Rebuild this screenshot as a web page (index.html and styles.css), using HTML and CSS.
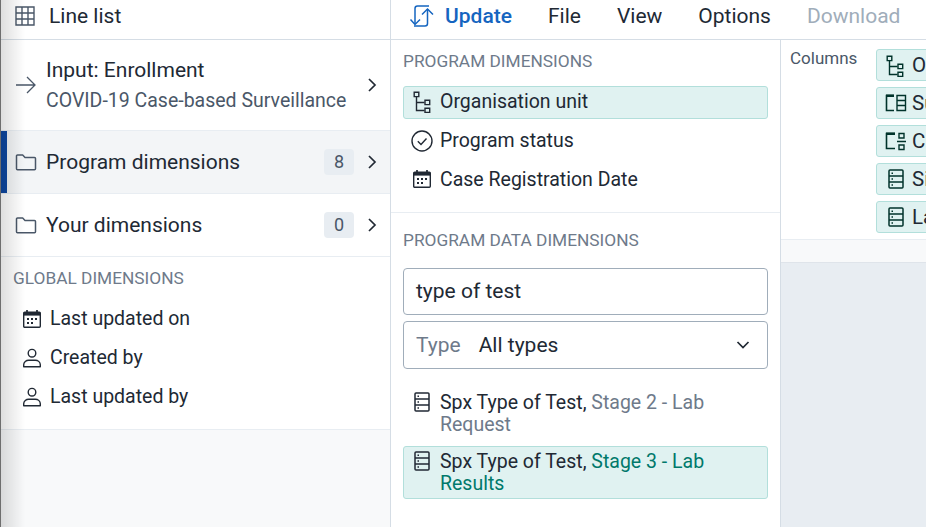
FILE: index.html
```html
<!DOCTYPE html>
<html lang="en">
  <head>
    <meta charset="UTF-8" />
    <meta name="viewport" content="width=device-width, initial-scale=1.0" />
    <title>Line list</title>
    <link rel="stylesheet" href="styles.css">
  </head>
  <body>
    <svg class="icon-defs" width="0" height="0" aria-hidden="true">
      <symbol id="i-folder" viewBox="0 0 22 20">
        <path d="M1.500 4a1 1 0 0 1 1-1h5.200l2.300 2.400h9.500a1 1 0 0 1 1 1v10.300a1 1 0 0 1-1 1H2.500a1 1 0 0 1-1-1z" fill="none" stroke="currentColor" stroke-width="1.500" stroke-linejoin="round"/>
      </symbol>
      <symbol id="i-chevron" viewBox="0 0 10 16">
        <path d="M2 2l6 6-6 6" fill="none" stroke="currentColor" stroke-width="1.700"/>
      </symbol>
      <symbol id="i-calendar" viewBox="0 0 20 20">
        <path d="M5 1v3M15 1v3" stroke="currentColor" stroke-width="1.700"/>
        <rect x="1.700" y="3.200" width="16.600" height="15" rx="1" fill="none" stroke="currentColor" stroke-width="1.400"/>
        <path d="M1.700 3.200h16.600v3.400H1.700z" fill="currentColor"/>
        <path d="M5 9h2v2H5zM9 9h2v2H9zM13 9h2v2h-2zM5 13h2v2H5zM9 13h2v2H9z" fill="currentColor"/>
      </symbol>
      <symbol id="i-user" viewBox="0 0 20 20">
        <circle cx="10" cy="5.200" r="3.800" fill="none" stroke="currentColor" stroke-width="1.400"/>
        <path d="M1.700 18.700v-1.900c0-2.800 2.500-4.600 5-4.600h6.600c2.500 0 5 1.800 5 4.600v1.900z" fill="none" stroke="currentColor" stroke-width="1.400" stroke-linejoin="round"/>
      </symbol>
      <symbol id="i-orgunit" viewBox="0 0 18 22">
        <path d="M3.500 5.500v14h8M3.500 11.500h8" fill="none" stroke="currentColor" stroke-width="1.400"/>
        <path d="M1.200 1.200h4.600v4.400H1.200zM12 9.200h4.700v4.400H12zM12 17.200h4.700v4.200H12z" fill="none" stroke="currentColor" stroke-width="1.400"/>
      </symbol>
      <symbol id="i-status" viewBox="0 0 22 22">
        <circle cx="11" cy="11" r="10" fill="none" stroke="currentColor" stroke-width="1.400"/>
        <path d="M6.800 11.300l3.200 3.200 5.500-6" fill="none" stroke="currentColor" stroke-width="1.400"/>
      </symbol>
      <symbol id="i-data" viewBox="0 0 16 20">
        <rect x="1" y="1" width="14" height="18" rx="1" fill="none" stroke="currentColor" stroke-width="1.500"/>
        <path d="M1 7h14M1 13h14" stroke="currentColor" stroke-width="1.500"/>
        <path d="M3.500 3.500h1.500v1.500H3.500zM3.500 9.300h1.500v1.500H3.500zM3.500 15.200h1.500v1.500H3.500z" fill="currentColor"/>
      </symbol>
    </svg>

    <div class="app">
      <header class="topbar">
        <div class="topbar-title">
          <svg class="grid-icon" viewBox="0 0 20 20">
            <path d="M1 1h18v18H1zM7 1v18M13 1v18M1 7h18M1 13h18" fill="none" stroke="currentColor" stroke-width="1.400"/>
          </svg>
          <span>Line list</span>
        </div>
        <nav class="menu">
          <span class="menu-update">
            <svg class="update-icon" viewBox="0 0 25 24">
              <path d="M6 20V4.500A2.500 2.500 0 0 1 8.500 2H20" fill="none" stroke="currentColor" stroke-width="1.500"/>
              <path d="M1.500 15.500L6 20.500l5-5" fill="none" stroke="currentColor" stroke-width="1.500"/>
              <path d="M18.500 5V19.500A2.500 2.500 0 0 1 16 22H5" fill="none" stroke="currentColor" stroke-width="1.500"/>
              <path d="M13 10.500L18.500 5l5.500 5.500" fill="none" stroke="currentColor" stroke-width="1.500"/>
            </svg>
            Update
          </span>
          <span class="menu-item">File</span>
          <span class="menu-item">View</span>
          <span class="menu-item">Options</span>
          <span class="menu-item menu-disabled">Download</span>
        </nav>
      </header>

      <div class="workspace">
        <aside class="sidebar">
          <div class="nav-row input-row">
            <svg class="nav-icon" viewBox="0 0 22 20">
              <path d="M1 10h19M12 2l8 8-8 8" fill="none" stroke="currentColor" stroke-width="1.300"/>
            </svg>
            <div class="nav-text">
              <div class="nav-label">Input: Enrollment</div>
              <div class="nav-sub">COVID-19 Case-based Surveillance</div>
            </div>
            <svg class="chevron"><use href="#i-chevron"/></svg>
          </div>
          <div class="nav-row nav-active">
            <svg class="nav-icon"><use href="#i-folder"/></svg>
            <div class="nav-label nav-text">Program dimensions</div>
            <span class="badge">8</span>
            <svg class="chevron"><use href="#i-chevron"/></svg>
          </div>
          <div class="nav-row">
            <svg class="nav-icon"><use href="#i-folder"/></svg>
            <div class="nav-label nav-text">Your dimensions</div>
            <span class="badge">0</span>
            <svg class="chevron"><use href="#i-chevron"/></svg>
          </div>
          <section class="global">
            <h3 class="section-title">Global dimensions</h3>
            <div class="global-item"><svg class="dim-icon"><use href="#i-calendar"/></svg>Last updated on</div>
            <div class="global-item"><svg class="dim-icon"><use href="#i-user"/></svg>Created by</div>
            <div class="global-item"><svg class="dim-icon"><use href="#i-user"/></svg>Last updated by</div>
          </section>
        </aside>

        <main class="panel">
          <section class="panel-top">
            <h3 class="section-title">Program dimensions</h3>
            <div class="dim selected"><svg class="dim-icon tall"><use href="#i-orgunit"/></svg>Organisation unit</div>
            <div class="dim"><svg class="dim-icon round"><use href="#i-status"/></svg>Program status</div>
            <div class="dim"><svg class="dim-icon"><use href="#i-calendar"/></svg>Case Registration Date</div>
          </section>
          <section class="panel-bottom">
            <h3 class="section-title">Program data dimensions</h3>
            <div class="field search-field">type of test</div>
            <div class="field type-field">
              <span class="type-label">Type</span>
              <span class="type-value">All types</span>
              <svg class="caret" viewBox="0 0 14 10">
                <path d="M1.500 2l5.500 5.500L12.500 2" fill="none" stroke="currentColor" stroke-width="1.700"/>
              </svg>
            </div>
            <div class="result">
              <svg class="result-icon"><use href="#i-data"/></svg>
              <div>Spx Type of Test, <span class="stage">Stage 2 - Lab Request</span></div>
            </div>
            <div class="result selected">
              <svg class="result-icon"><use href="#i-data"/></svg>
              <div>Spx Type of Test, <span class="stage">Stage 3 - Lab Results</span></div>
            </div>
          </section>
        </main>

        <div class="layout-area">
          <div class="layout-card">
            <div class="columns-label">Columns</div>
            <div class="chips">
              <div class="chip"><svg class="chip-icon tall"><use href="#i-orgunit"/></svg>Organisation unit</div>
              <div class="chip">
                <svg class="chip-icon wide" viewBox="0 0 22 20">
                  <path d="M9 2.500H1.500v15H9" fill="none" stroke="currentColor" stroke-width="1.600"/>
                  <path d="M1 1.500h8v2.500H1z" fill="currentColor"/>
                  <path d="M12 2.500h8.500v15H12zM12 7.500h8.500M12 12.500h8.500" fill="none" stroke="currentColor" stroke-width="1.400"/>
                </svg>
                Su
              </div>
              <div class="chip">
                <svg class="chip-icon wide" viewBox="0 0 22 20">
                  <path d="M10 2.500H1.500v15H10" fill="none" stroke="currentColor" stroke-width="1.600"/>
                  <path d="M1 1.500h9v2.500H1z" fill="currentColor"/>
                  <path d="M14 2.500h5v4.500h-5zM14 14h5v4.500h-5zM12 10.500h9" fill="none" stroke="currentColor" stroke-width="1.400"/>
                </svg>
                C
              </div>
              <div class="chip"><svg class="chip-icon data"><use href="#i-data"/></svg>Si</div>
              <div class="chip"><svg class="chip-icon data"><use href="#i-data"/></svg>La</div>
            </div>
          </div>
          <div class="layout-strip"></div>
          <div class="canvas"></div>
        </div>
      </div>
    </div>
  </body>
</html>
```

FILE: styles.css
```css
:root {
  --border: #d5dde5;
  --border-light: #e8edf2;
  --text: #212934;
  --text-sub: #4a5768;
  --text-muted: #6e7a8a;
  --teal-bg: #e0f2f1;
  --teal-border: #b2dfdb;
}

* {
  box-sizing: border-box;
}

html,
body {
  margin: 0;
  height: 100%;
  overflow: hidden;
}

body {
  background: #fff;
  color: var(--text);
  font-family: Roboto, "Liberation Sans", sans-serif;
  font-size: 19.5px;
}

.icon-defs {
  position: absolute;
}

.app {
  position: relative;
  display: flex;
  flex-direction: column;
  height: 527px;
}

/* dark edge and soft shadow on the left of the window */
.app::after {
  content: '';
  position: absolute;
  top: 0;
  bottom: 0;
  left: 0;
  width: 24px;
  border-left: 1px solid #6e6e6e;
  background: linear-gradient(to right, rgba(0, 0, 0, 0.13), rgba(0, 0, 0, 0));
  pointer-events: none;
}

/* top bar */
.topbar {
  display: flex;
  height: 40px;
  flex-shrink: 0;
  padding-bottom: 8px;
  border-bottom: 1px solid var(--border);
  font-size: 21px;
}

.topbar-title {
  display: flex;
  align-items: center;
  flex-shrink: 0;
  width: 391px;
  margin-bottom: -8px;
  padding: 0 0 8px 15px;
  border-right: 1px solid var(--border);
}

.grid-icon {
  width: 20px;
  height: 20px;
  margin-right: 14px;
  color: var(--text-sub);
}

.menu {
  display: flex;
  align-items: center;
  padding-left: 18px;
  white-space: nowrap;
}

.menu-update {
  display: flex;
  align-items: center;
  margin-right: 36px;
  color: #1565c0;
  font-weight: 500;
}

.update-icon {
  width: 25px;
  height: 24px;
  margin-right: 11px;
}

.menu-item {
  margin-right: 36px;
}

.menu-disabled {
  color: #a0adba;
}

/* main columns */
.workspace {
  display: flex;
  flex: 1;
  min-height: 0;
}

.sidebar {
  width: 391px;
  flex-shrink: 0;
  background: #f8f9fa;
  border-right: 1px solid var(--border);
}

.nav-row {
  display: flex;
  align-items: center;
  height: 63px;
  padding-left: 15px;
  padding-right: 13px;
  background: #fff;
  border-bottom: 1px solid var(--border-light);
}

.input-row {
  height: 91px;
}

.nav-active {
  background: #f3f5f7;
  box-shadow: inset 7px 0 0 #0d47a1;
}

.nav-icon {
  width: 22px;
  height: 20px;
  margin-right: 9px;
  color: var(--text-sub);
}

.nav-text {
  flex: 1;
}

.nav-label {
  font-size: 21px;
}

.input-row .nav-text {
  padding-bottom: 1px;
}

.nav-sub {
  margin-top: 7px;
  color: var(--text-sub);
}

.badge {
  width: 30px;
  height: 26px;
  margin-right: 13px;
  border-radius: 4px;
  background: var(--border-light);
  color: var(--text-sub);
  font-size: 18px;
  line-height: 26px;
  text-align: center;
}

.chevron {
  width: 10px;
  height: 16px;
  color: var(--text);
}

.section-title {
  margin: 0;
  color: var(--text-muted);
  font-size: 17.3px;
  font-weight: 400;
  line-height: 20px;
  text-transform: uppercase;
}

.global {
  padding: 11px 13px 13px;
  background: #fff;
  border-bottom: 1px solid var(--border-light);
}

.global-item {
  display: flex;
  align-items: center;
  height: 39px;
  padding-left: 9px;
}

.global .section-title {
  margin-bottom: 11px;
}

.dim-icon {
  width: 20px;
  height: 20px;
  margin-right: 8px;
  flex-shrink: 0;
}

.dim-icon.tall {
  height: 22px;
  margin-top: 2px;
}

.dim-icon.round {
  width: 22px;
  height: 22px;
  margin: 2px 7px 0 -1px;
}

/* dimensions panel */
.panel {
  width: 390px;
  flex-shrink: 0;
  border-right: 1px solid var(--border);
}

.panel-top {
  height: 173px;
  padding: 11px 12px 0;
  border-bottom: 1px solid var(--border-light);
}

.panel-top .section-title {
  margin-bottom: 15px;
}

.dim {
  display: flex;
  align-items: center;
  height: 33px;
  margin-bottom: 6px;
  padding: 0 0 3px 8px;
  border: 1px solid transparent;
  border-radius: 3px;
}

.panel-bottom {
  padding: 17px 12px 0;
}

.panel-bottom .section-title {
  margin-bottom: 18px;
}

.field {
  display: flex;
  align-items: center;
  height: 47px;
  padding: 0 12px;
  border: 1px solid #a0adba;
  border-radius: 4px;
  font-size: 21px;
}

.search-field {
  margin-bottom: 6px;
  padding-bottom: 2px;
}

.type-field {
  height: 48px;
  margin-bottom: 18px;
}

.type-label {
  margin-right: 18px;
  color: var(--text-muted);
}

.type-value {
  flex: 1;
}

.caret {
  width: 14px;
  height: 10px;
  margin-right: 5px;
}

.result {
  display: flex;
  margin-bottom: 6px;
  padding: 4px 8px 3px 10px;
  border: 1px solid transparent;
  border-radius: 3px;
  line-height: 22px;
}

.result-icon {
  width: 16px;
  height: 20px;
  margin-right: 10px;
  flex-shrink: 0;
}

.stage {
  color: var(--text-muted);
}

.selected {
  background: var(--teal-bg);
  border-color: var(--teal-border);
}

.result.selected .stage {
  color: #00796b;
}

/* layout area */
.layout-area {
  display: flex;
  flex-direction: column;
  flex: 1;
  min-width: 0;
  overflow: hidden;
}

.layout-card {
  display: flex;
  height: 200px;
  padding: 9px 0 0 9px;
  border-bottom: 1px solid var(--border-light);
}

.columns-label {
  width: 86px;
  flex-shrink: 0;
  margin-top: -1px;
  color: var(--text-sub);
  font-size: 17px;
  line-height: 20px;
}

.chips {
  display: flex;
  flex-direction: column;
  gap: 6px;
}

.chip {
  display: flex;
  align-items: center;
  width: 220px;
  height: 32px;
  padding-left: 9px;
  border: 1px solid var(--teal-border);
  border-radius: 3px;
  background: var(--teal-bg);
  font-size: 20.5px;
  white-space: nowrap;
}

.chip-icon {
  width: 18px;
  height: 20px;
  margin-right: 8px;
  color: #00332b;
  flex-shrink: 0;
}

.chip-icon.tall {
  height: 22px;
  margin-top: 2px;
}

.chip-icon.wide {
  width: 22px;
  margin-right: 5px;
  margin-left: -1px;
}

.chip-icon.data {
  width: 16px;
  margin: 0 8px 0 2px;
}

.layout-strip {
  height: 22px;
  background: #f8f9fa;
}

.canvas {
  flex: 1;
  background: #e8edf2;
  border-top: 1px solid #dfe4ea;
}
```
